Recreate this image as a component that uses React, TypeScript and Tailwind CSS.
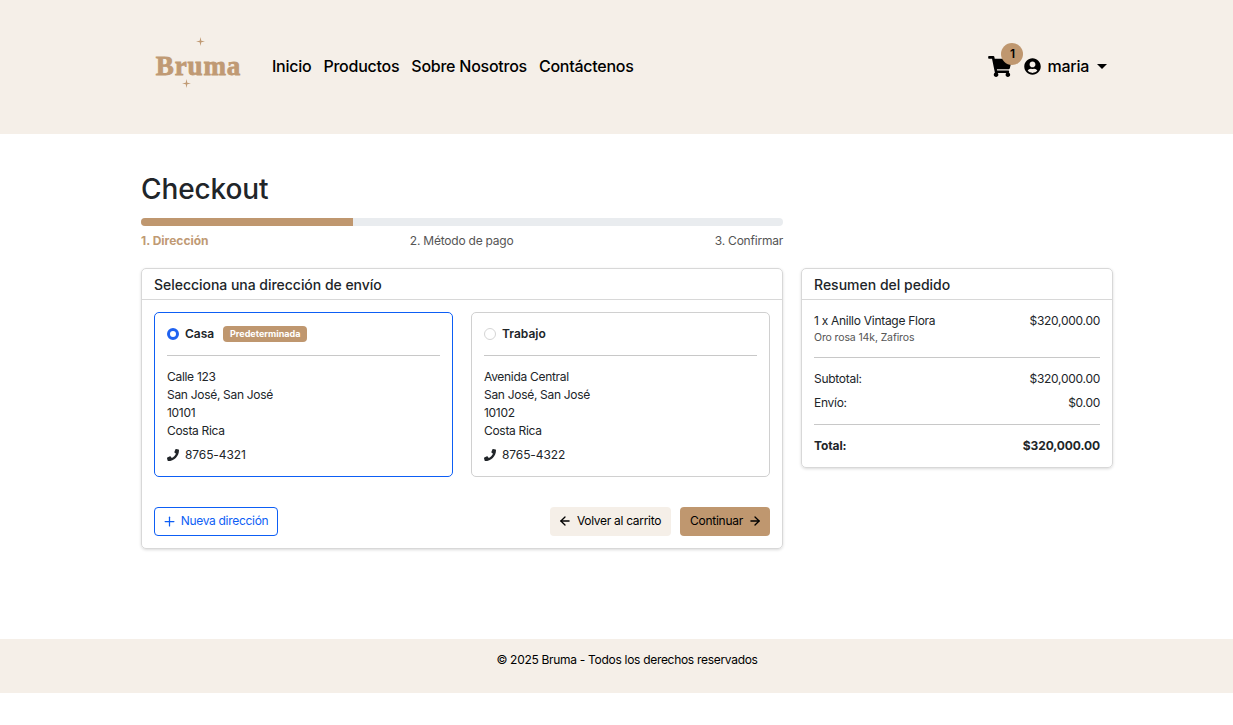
import React from "react";
import { FaShoppingCart, FaUserCircle, FaPhone } from "react-icons/fa";
import { ArrowLeft, ArrowRight, Plus } from "lucide-react";

const Star = ({ className }: { className: string }) => (
  <svg viewBox="0 0 10 10" className={className} fill="#c09a74">
    <path d="M5 0 L5.9 4.1 L10 5 L5.9 5.9 L5 10 L4.1 5.9 L0 5 L4.1 4.1 Z" />
  </svg>
);

const addresses = [
  { name: "Casa", street: "Calle 123", zip: "10101", city: "San José, San José", country: "Costa Rica", phone: "8765-4321", selected: true },
  { name: "Trabajo", street: "Avenida Central", zip: "10102", city: "San José, San José", country: "Costa Rica", phone: "8765-4322", selected: false },
];

const AddressCard = ({ a }: { a: (typeof addresses)[number] }) => (
  <div
    className={`flex-1 h-[165px] rounded-[5px] border px-3 ${
      a.selected ? "border-[#0d5ef5]" : "border-[#d0d0d0]"
    }`}
  >
    {/* name */}
    <div className="flex items-center h-[43px] border-b border-[#c8c8c8]">
      {a.selected ? (
        <span className="w-3 h-3 rounded-full border-[3.5px] border-[#1f62f0] bg-white mr-[6px]" />
      ) : (
        <span className="w-3 h-3 rounded-full border border-[#d5d5d5] bg-white mr-[6px]" />
      )}
      <span className="text-[12px] font-semibold text-[#212529]">{a.name}</span>
      {a.selected && (
        <span className="ml-[9px] h-4 w-[84px] text-center rounded-[4px] bg-[#bf976f] text-white text-[9px] font-bold leading-4">
          Predeterminada
        </span>
      )}
    </div>
    {/* address */}
    <div className="mt-3 text-[12px] leading-[18px] tracking-[-0.3px] text-[#212529]">
      <p>{a.street}</p>
      <p>{a.city}</p>
      <p>{a.zip}</p>
      <p>{a.country}</p>
    </div>
    <div className="mt-[6px] flex items-center gap-[6px] text-[12px] leading-[18px] tracking-[-0.1px] text-[#212529]">
      <FaPhone className="w-3 h-3" />
      <span>{a.phone}</span>
    </div>
  </div>
);

const Row = ({ label, value, bold }: { label: string; value: string; bold?: boolean }) => (
  <div
    className={`flex justify-between text-[12px] leading-[18px] text-[#212529] ${
      bold ? "font-bold tracking-[-0.1px]" : "tracking-[-0.28px]"
    }`}
  >
    <span>{label}</span>
    <span>{value}</span>
  </div>
);

export default function App() {
  return (
    <div className="min-h-[725px] bg-white font-['Inter',sans-serif]">
      {/* header */}
      <header className="h-[134px] bg-[#f5efe8] flex items-center justify-between pl-[155px] pr-[126px] pb-[2px]">
        <div className="flex items-center">
          <div className="relative w-[87px] h-[60px] flex items-center justify-center">
            <Star className="absolute left-[41px] top-[1px] w-[9px] h-[9px]" />
            <span className="font-['Liberation_Serif',serif] font-bold text-[27px] leading-none tracking-[0.9px] text-[#c09a74] [-webkit-text-stroke:0.8px_#c09a74]">
              Bruma
            </span>
            <Star className="absolute left-[27px] bottom-[8px] w-[9px] h-[9px]" />
          </div>
          <nav className="ml-[30px] flex gap-3 text-[16px] font-medium tracking-[-0.25px] text-black">
            <span>Inicio</span>
            <span>Productos</span>
            <span>Sobre Nosotros</span>
            <span>Contáctenos</span>
          </nav>
        </div>
        <div className="flex items-center text-black">
          <div className="relative">
            <FaShoppingCart className="w-6 h-[21px]" />
            <span className="absolute left-[13px] top-[-13px] w-[22px] h-[22px] rounded-full bg-[#bf976f] text-[12px] font-semibold flex items-center justify-center">
              1
            </span>
          </div>
          <FaUserCircle className="ml-3 w-[17px] h-[17px]" />
          <span className="ml-[6px] text-[16px] font-medium tracking-[-0.25px]">maria</span>
          <span className="ml-[8px] w-0 h-0 border-x-[5px] border-x-transparent border-t-[5px] border-t-black" />
        </div>
      </header>

      <main className="mx-[141px] mt-[37px] w-[972px] h-[468px]">
        <h1 className="text-[28px] leading-9 font-medium tracking-[-0.1px] text-[#212529]">Checkout</h1>
        <div className="flex gap-[18px]">
          <div className="w-[642px]">
            {/* progress */}
            <div className="mt-[11px] h-2 rounded-full bg-[#e9ecef] overflow-hidden">
              <div className="w-[33%] h-full bg-[#bf976f]" />
            </div>
            <div className="mt-[6px] flex justify-between text-[12px] leading-[18px] tracking-[-0.22px] text-[#555]">
              <span className="font-bold tracking-normal text-[#c09a74]">1. Dirección</span>
              <span>2. Método de pago</span>
              <span>3. Confirmar</span>
            </div>
            {/* address card */}
            <section className="mt-[18px] h-[281px] rounded-[5px] border border-[#d8d8d8] shadow-[0_1px_3px_rgba(0,0,0,0.15)]">
              <h2 className="h-[31px] px-3 border-b border-[#d8d8d8] text-[14px] leading-[31px] font-medium tracking-[-0.03px] text-[#212529]">
                Selecciona una dirección de envío
              </h2>
              <div className="px-3 pt-3 flex gap-[18px]">
                {addresses.map((a) => (
                  <AddressCard key={a.name} a={a} />
                ))}
              </div>
              <div className="mt-[30px] px-3 flex items-center justify-between">
                <button className="h-[29px] w-[124px] pb-[1px] pr-[2px] rounded-[4px] border border-[#0d5ef5] text-[#0d5ef5] text-[12px] tracking-[-0.3px] flex items-center justify-center gap-[4px]">
                  <Plus className="w-[15px] h-[15px]" strokeWidth={2} />
                  Nueva dirección
                </button>
                <div className="flex gap-[9px]">
                  <button className="h-[29px] w-[121px] pb-[1px] pr-[2px] rounded-[4px] bg-[#f5efe8] text-black text-[12px] tracking-[-0.3px] flex items-center justify-center gap-[5px]">
                    <ArrowLeft className="w-[14px] h-[14px]" strokeWidth={2.25} />
                    Volver al carrito
                  </button>
                  <button className="h-[29px] w-[90px] pb-[1px] pl-[2px] rounded-[4px] bg-[#bf976f] text-black text-[12px] tracking-[-0.27px] flex items-center justify-center gap-[5px]">
                    Continuar
                    <ArrowRight className="w-[14px] h-[14px]" strokeWidth={2.25} />
                  </button>
                </div>
              </div>
            </section>
          </div>

          {/* summary */}
          <aside className="w-[312px] mt-[61px] h-[200px] rounded-[5px] border border-[#d8d8d8] shadow-[0_1px_3px_rgba(0,0,0,0.15)]">
            <h2 className="h-[31px] px-3 border-b border-[#d8d8d8] text-[14px] leading-[31px] font-medium text-[#212529]">
              Resumen del pedido
            </h2>
            <div className="px-3 pt-3">
              <Row label="1 x Anillo Vintage Flora" value="$320,000.00" />
              <p className="text-[10.5px] leading-[15px] tracking-[-0.12px] text-[#555]">Oro rosa 14k, Zafiros</p>
              <div className="mt-3 border-t border-[#c8c8c8]" />
              <div className="mt-3 flex flex-col gap-[6px]">
                <Row label="Subtotal:" value="$320,000.00" />
                <Row label="Envío:" value="$0.00" />
              </div>
              <div className="mt-3 border-t border-[#c8c8c8]" />
              <div className="mt-3">
                <Row label="Total:" value="$320,000.00" bold />
              </div>
            </div>
          </aside>
        </div>
      </main>

      {/* footer */}
      <footer className="h-[54px] bg-[#f5efe8] pl-[21px] pt-3 text-center text-[12px] leading-[18px] tracking-[-0.3px] text-black">
        © 2025 Bruma - Todos los derechos reservados
      </footer>
    </div>
  );
}
